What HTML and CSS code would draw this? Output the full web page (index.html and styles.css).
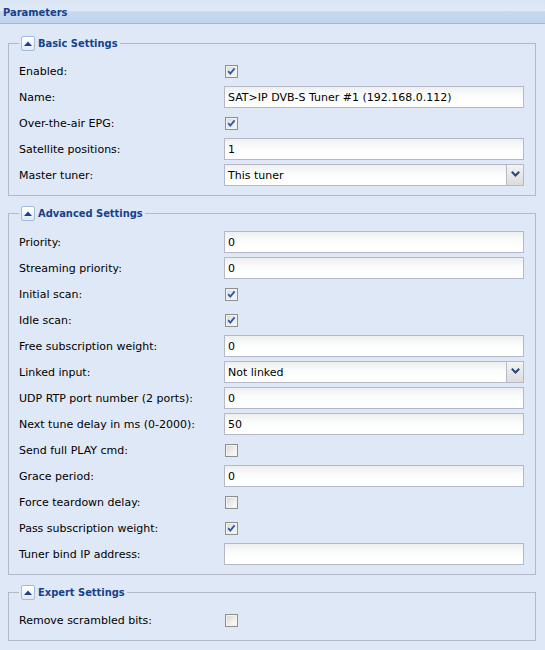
FILE: index.html
```html
<!DOCTYPE html>
<html>
<head>
<meta charset="utf-8">
<link rel="stylesheet" href="styles.css">
</head>
<body>
<div class="panel">
  <div class="panel-header"><span class="panel-title">Parameters</span></div>
  <div class="panel-body">

    <fieldset class="fs">
      <legend class="fs-legend"><span class="toggle"><svg width="8" height="5" viewBox="0 0 8 5"><path d="M0 5 L4 0.5 L8 5 Z" fill="#1c3f94"/></svg></span><span class="fs-title">Basic Settings</span></legend>
      <div class="row"><span class="lbl">Enabled:</span><span class="cb on"><svg width="11" height="11" viewBox="0 0 11 11"><path d="M2.2 5.2 L4.3 7.6 L8.6 2.4" fill="none" stroke="#2d56b8" stroke-width="1.8"/></svg></span></div>
      <div class="row"><span class="lbl">Name:</span><span class="txt">SAT&gt;IP DVB-S Tuner #1 (192.168.0.112)</span></div>
      <div class="row"><span class="lbl">Over-the-air EPG:</span><span class="cb on"><svg width="11" height="11" viewBox="0 0 11 11"><path d="M2.2 5.2 L4.3 7.6 L8.6 2.4" fill="none" stroke="#2d56b8" stroke-width="1.8"/></svg></span></div>
      <div class="row"><span class="lbl">Satellite positions:</span><span class="txt">1</span></div>
      <div class="row"><span class="lbl">Master tuner:</span><span class="combo"><span class="combo-text">This tuner</span><span class="trigger"><svg width="9" height="6" viewBox="0 0 9 6"><path d="M0.8 0.8 L4.5 4.5 L8.2 0.8" fill="none" stroke="#27467f" stroke-width="2"/></svg></span></span></div>
    </fieldset>

    <fieldset class="fs fs-adv">
      <legend class="fs-legend"><span class="toggle"><svg width="8" height="5" viewBox="0 0 8 5"><path d="M0 5 L4 0.5 L8 5 Z" fill="#1c3f94"/></svg></span><span class="fs-title">Advanced Settings</span></legend>
      <div class="row"><span class="lbl">Priority:</span><span class="txt">0</span></div>
      <div class="row"><span class="lbl">Streaming priority:</span><span class="txt">0</span></div>
      <div class="row"><span class="lbl">Initial scan:</span><span class="cb on"><svg width="11" height="11" viewBox="0 0 11 11"><path d="M2.2 5.2 L4.3 7.6 L8.6 2.4" fill="none" stroke="#2d56b8" stroke-width="1.8"/></svg></span></div>
      <div class="row"><span class="lbl">Idle scan:</span><span class="cb on"><svg width="11" height="11" viewBox="0 0 11 11"><path d="M2.2 5.2 L4.3 7.6 L8.6 2.4" fill="none" stroke="#2d56b8" stroke-width="1.8"/></svg></span></div>
      <div class="row"><span class="lbl">Free subscription weight:</span><span class="txt">0</span></div>
      <div class="row"><span class="lbl">Linked input:</span><span class="combo"><span class="combo-text">Not linked</span><span class="trigger"><svg width="9" height="6" viewBox="0 0 9 6"><path d="M0.8 0.8 L4.5 4.5 L8.2 0.8" fill="none" stroke="#27467f" stroke-width="2"/></svg></span></span></div>
      <div class="row"><span class="lbl">UDP RTP port number (2 ports):</span><span class="txt">0</span></div>
      <div class="row"><span class="lbl">Next tune delay in ms (0-2000):</span><span class="txt">50</span></div>
      <div class="row"><span class="lbl">Send full PLAY cmd:</span><span class="cb"></span></div>
      <div class="row"><span class="lbl">Grace period:</span><span class="txt">0</span></div>
      <div class="row"><span class="lbl">Force teardown delay:</span><span class="cb"></span></div>
      <div class="row"><span class="lbl">Pass subscription weight:</span><span class="cb on"><svg width="11" height="11" viewBox="0 0 11 11"><path d="M2.2 5.2 L4.3 7.6 L8.6 2.4" fill="none" stroke="#2d56b8" stroke-width="1.8"/></svg></span></div>
      <div class="row"><span class="lbl">Tuner bind IP address:</span><span class="txt"></span></div>
    </fieldset>

    <fieldset class="fs">
      <legend class="fs-legend"><span class="toggle"><svg width="8" height="5" viewBox="0 0 8 5"><path d="M0 5 L4 0.5 L8 5 Z" fill="#1c3f94"/></svg></span><span class="fs-title">Expert Settings</span></legend>
      <div class="row"><span class="lbl">Remove scrambled bits:</span><span class="cb"></span></div>
    </fieldset>

  </div>
</div>
</body>
</html>
```

FILE: styles.css
```css
html, body {
  margin: 0;
  padding: 0;
  background: #dfe8f6;
}
body {
  font-family: "DejaVu Sans", Tahoma, sans-serif;
  font-size: 11px;
  color: #000;
}
.panel-header {
  height: 23px;
  border-bottom: 1px solid #99bbe8;
  background: linear-gradient(to bottom, #d8e4f3 0, #e1eaf7 46%, #c8d9f0 50%, #bfd3ee 100%);
  display: flex;
  align-items: center;
  padding-left: 3px;
}
.panel-title {
  font-weight: bold;
  font-size: 11px;
  color: #15428b;
  font-family: "DejaVu Sans Condensed", "DejaVu Sans", sans-serif;
  font-stretch: condensed;
  padding-top: 1px;
}
.panel-body {
  padding: 12px 9px 9px 8px;
}
.fs {
  margin: 0 0 10px 0;
  padding: 7px 10px 7px 10px;
  border: 1px solid #b5b8c8;
  min-width: 0;
}
.fs-adv {
  padding-top: 8px;
}
.fs-legend {
  padding: 0 2px;
  height: 15px;
  display: flex;
  align-items: center;
}
.toggle {
  width: 14px;
  height: 15px;
  box-sizing: border-box;
  border: 1px solid #a3bcd9;
  border-radius: 2px;
  background: linear-gradient(to bottom, #ffffff 0, #f3f7fc 50%, #dfe8f5 100%);
  display: flex;
  align-items: center;
  justify-content: center;
  margin-right: 3px;
}
.toggle svg { display: block; margin-top: -1px; }
.fs-title {
  font-weight: bold;
  font-size: 11px;
  color: #15428b;
  font-family: "DejaVu Sans Condensed", "DejaVu Sans", sans-serif;
  font-stretch: condensed;
}
.row {
  display: flex;
  align-items: center;
  height: 26px;
}
.lbl {
  width: 205px;
  flex: none;
  padding-top: 1px;
}
.cb {
  width: 13px;
  height: 13px;
  box-sizing: border-box;
  margin-left: 1px;
  border: 1px solid #8e8f8f;
  background: linear-gradient(135deg, #d6d6d0 0, #ecece8 50%, #ffffff 100%);
  box-shadow: inset 0 0 0 1px #f2f2ee;
  display: flex;
  align-items: center;
  justify-content: center;
}
.cb.on {
  background: linear-gradient(135deg, #dcdcd6 0, #eeeeea 60%, #f8f8f6 100%);
}
.cb svg { display: block; }
.txt, .combo {
  width: 300px;
  height: 22px;
  box-sizing: border-box;
  border: 1px solid #b5b8c8;
  background: linear-gradient(to bottom, #eef0f0 0, #fafbfb 8px, #ffffff 14px);
  padding: 1px 3px 0 3px;
  line-height: 20px;
  white-space: nowrap;
  overflow: hidden;
}
.combo {
  display: flex;
  padding-right: 0;
  padding-top: 0;
}
.combo-text {
  flex: 1;
  padding-top: 1px;
}
.trigger {
  width: 17px;
  flex: none;
  border-left: 1px solid #b5b8c8;
  box-sizing: border-box;
  background: linear-gradient(to bottom, #f4f4f4 0, #e8e8e8 50%, #dcdcdc 100%);
  display: flex;
  align-items: center;
  justify-content: center;
}
.trigger svg { display: block; margin-top: -3px; }
```
